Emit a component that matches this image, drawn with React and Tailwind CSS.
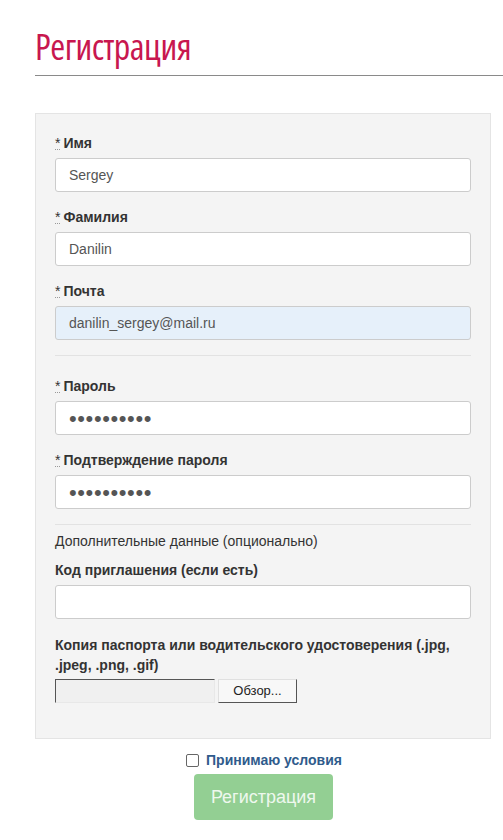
const SANS = "font-['Liberation_Sans',Arial,sans-serif]";

function Req() {
  return <span className="border-b border-dotted border-[#999] font-normal text-[#333] mr-[3px] leading-[12px] inline-block">*</span>;
}

function Label({ required, children }) {
  return (
    <div className="h-5 leading-5 mb-[5px] text-[14px] font-bold text-[#333]">
      {required && <Req />}
      {children}
    </div>
  );
}

function Field({ value, dots, autofill }) {
  return (
    <div
      className={
        "h-[34px] border border-[#ccc] rounded-[3px] px-[13px] flex items-center text-[14px] text-[#555] " +
        (autofill ? "bg-[#e6f0fa]" : "bg-white")
      }
    >
      {dots ? (
        <span className="text-[22px] leading-none tracking-[0.6px] text-[#555] pt-[1px]">{"••••••••••"}</span>
      ) : (
        value
      )}
    </div>
  );
}

function Group({ label, required, children, mb = "mb-[15px]" }) {
  return (
    <div className={mb}>
      <Label required={required}>{label}</Label>
      {children}
    </div>
  );
}

export default function App() {
  return (
    <div className={`${SANS} bg-white min-h-[840px] pl-[35px] pt-[27px]`}>
      <h1 className="font-['Open_Sans',sans-serif] font-stretch-[75%] text-[36px] leading-[40px] text-[#c8174f] font-normal tracking-[-0.5px]">
        Регистрация
      </h1>
      <div className="mt-[8px] h-px bg-[#8a8a8a]" />

      <div className="mt-[37px] w-[456px] bg-[#f4f4f4] border border-[#e4e4e4] pt-[19px] px-[19px] pb-[35px]">
        <Group label="Имя" required>
          <Field value="Sergey" />
        </Group>
        <Group label="Фамилия" required>
          <Field value="Danilin" />
        </Group>
        <Group label="Почта" required>
          <Field value="danilin_sergey@mail.ru" autofill />
        </Group>
        <div className="h-px bg-[#e2e2e2] mb-[20px]" />
        <Group label="Пароль" required>
          <Field dots />
        </Group>
        <Group label="Подтверждение пароля" required>
          <Field dots />
        </Group>
        <div className="h-px bg-[#e2e2e2] mb-[6px]" />
        <div className="h-5 leading-5 text-[14px] text-[#333] mb-[9px]">Дополнительные данные (опционально)</div>
        <Group label="Код приглашения (если есть)" mb="mb-[16px]">
          <Field value="" />
        </Group>
        <div className="text-[14px] font-bold text-[#333] leading-[20px] mb-[4px]">
          Копия паспорта или водительского удостоверения (.jpg, .jpeg, .png, .gif)
        </div>
        <div className="flex items-center">
          <div className="w-[160px] h-[24px] bg-[#f0f0f0] border-t border-l border-[#555] border-b border-r border-b-[#e8e8e8] border-r-[#e8e8e8]" />
          <div className="ml-[3px] w-[79px] h-[24px] bg-[#f8f8f8] border border-t-[#e0e0e0] border-l-[#e0e0e0] border-b-[#555] border-r-[#555] text-[13px] text-[#222] flex items-center justify-center">
            Обзор...
          </div>
        </div>
      </div>

      <div className="w-[456px] flex flex-col items-center pt-[14px]">
        <div className="flex items-center h-[15px] ml-[2px]">
          <span className="w-[13px] h-[13px] border border-[#666] bg-white rounded-[2px] mr-[7px]" />
          <span className="text-[14px] font-bold text-[#2f5b8c]">Принимаю условия</span>
        </div>
        <div className="mt-[6px] ml-[1px] w-[139px] h-[46px] rounded-[4px] bg-[#93cf93] text-[#eef8ee] text-[18px] flex items-center justify-center">
          Регистрация
        </div>
      </div>
    </div>
  );
}
